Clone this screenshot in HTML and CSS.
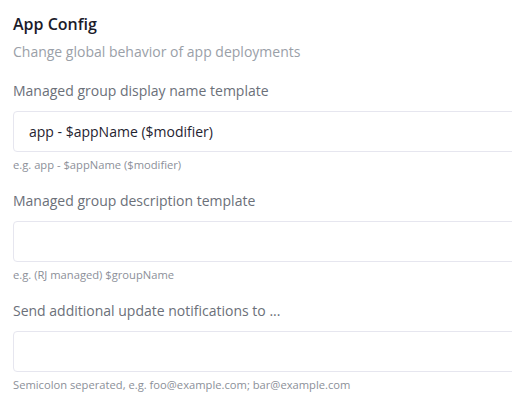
FILE: index.html
```html
<!DOCTYPE html>
<html>
<head>
<meta charset="utf-8">
<link rel="stylesheet" href="styles.css">
</head>
<body>
<div class="panel">
  <h2 class="title">App Config</h2>
  <p class="subtitle">Change global behavior of app deployments</p>
  <div class="field">
    <label class="label">Managed group display name template</label>
    <div class="input">app - $appName ($modifier)</div>
    <div class="help">e.g. app - $appName ($modifier)</div>
  </div>
  <div class="field">
    <label class="label">Managed group description template</label>
    <div class="input"></div>
    <div class="help">e.g. (RJ managed) $groupName</div>
  </div>
  <div class="field">
    <label class="label">Send additional update notifications to ...</label>
    <div class="input"></div>
    <div class="help">Semicolon seperated, e.g. foo@example.com; bar@example.com</div>
  </div>
</div>
</body>
</html>
```

FILE: styles.css
```css
html, body {
  margin: 0;
  padding: 0;
  background: #ffffff;
  overflow: hidden;
}
body {
  font-family: "Open Sans", sans-serif;
}
.panel {
  padding: 14px 0 0 13px;
  width: 560px;
}
.title {
  margin: 0;
  font-size: 16px;
  line-height: 20px;
  font-weight: 600;
  color: #1b1b2a;
}
.subtitle {
  margin: 8px 0 0;
  font-size: 14px;
  line-height: 20px;
  color: #9aa0a8;
}
.field {
  display: flex;
  flex-direction: column;
  margin-top: 19px;
}
.field + .field {
  margin-top: 18px;
}
.label {
  font-size: 14px;
  line-height: 20px;
  color: #6b7079;
}
.input {
  margin-top: 10px;
  height: 39px;
  border: 1px solid #e6e6ef;
  border-radius: 4px;
  padding: 0 15px;
  display: flex;
  align-items: center;
  font-size: 14px;
  color: #1f2330;
}
.help {
  margin-top: 5px;
  font-size: 11.2px;
  line-height: 16px;
  color: #8c9099;
}
```
